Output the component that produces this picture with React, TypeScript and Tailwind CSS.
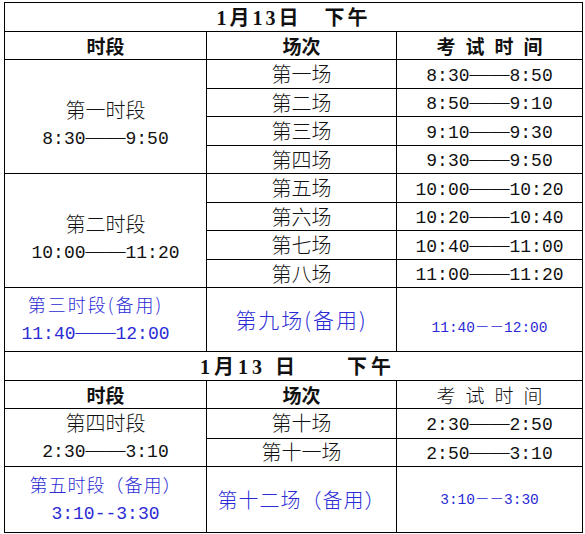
import React from "react";

const cjk = "font-['Noto_Sans_CJK_SC',sans-serif] font-light";
const mono = "font-['Liberation_Mono','Noto_Sans_CJK_SC',monospace]";
const serifDash = "font-['Liberation_Serif',serif]";

// a time range: digits in mono, the dashes in a face where — is a full em
const Time = ({
  from,
  to,
  dash = "——",
  className = "",
  dashClass = serifDash,
}: {
  from: string;
  to: string;
  dash?: string;
  className?: string;
  dashClass?: string;
}) => (
  <span className={`${mono} whitespace-nowrap ${className}`}>
    {from}
    <span className={dashClass}>{dash}</span>
    {to}
  </span>
);

const cell = "border border-black text-center align-middle p-0";

const firstSlots = [
  {
    name: "第一时段",
    from: "8:30",
    to: "9:50",
    rows: [
      ["第一场", "8:30", "8:50"],
      ["第二场", "8:50", "9:10"],
      ["第三场", "9:10", "9:30"],
      ["第四场", "9:30", "9:50"],
    ],
  },
  {
    name: "第二时段",
    from: "10:00",
    to: "11:20",
    rows: [
      ["第五场", "10:00", "10:20"],
      ["第六场", "10:20", "10:40"],
      ["第七场", "10:40", "11:00"],
      ["第八场", "11:00", "11:20"],
    ],
  },
];

const heights = ["h-[29px]", "h-[28px]", "h-[29px]", "h-[28px]"];

export default function App() {
  return (
    <div className="bg-white w-[585px] h-[534px] pt-[2px] pl-[4px] text-[#111]">
      <table className={`border-collapse table-fixed w-[578px] ${cjk}`}>
        <colgroup>
          <col className="w-[202px]" />
          <col className="w-[190px]" />
          <col className="w-[186px]" />
        </colgroup>
        <tbody>
          <tr className="h-[29px]">
            <td colSpan={3} className={`${cell} text-[20px] font-bold leading-none`}>
              <span className="font-['Liberation_Serif','Noto_Sans_CJK_SC',serif] tracking-[3px]">
                1月13日　下午
              </span>
            </td>
          </tr>
          <tr className="h-[28px]">
            <td className={`${cell} text-[19px] font-bold leading-none`}>时段</td>
            <td className={`${cell} text-[19px] font-bold leading-none`}>场次</td>
            <td className={`${cell} text-[19px] font-bold leading-none tracking-[10px] pl-[10px]`}>考试时间</td>
          </tr>

          {firstSlots.map((slot) =>
            slot.rows.map((r, i) => (
              <tr key={r[0]} className={heights[i]}>
                {i === 0 && (
                  <td rowSpan={4} className={`${cell} pt-4`}>
                    <div className="text-[20px] leading-[27px]">{slot.name}</div>
                    <div className="text-[18px] leading-[27px]">
                      <Time from={slot.from} to={slot.to} dashClass={`${serifDash} text-[20px]`} />
                    </div>
                  </td>
                )}
                <td className={`${cell} text-[20px] leading-none`}>{r[0]}</td>
                <td className={`${cell} text-[18px] leading-none`}>
                  <Time from={r[1]} to={r[2]} dashClass={`${serifDash} text-[20px]`} />
                </td>
              </tr>
            ))
          )}

          <tr className="h-[64px] text-[#2b2bd6]">
            <td className={`${cell} pr-[20px]`}>
              <div className="text-[18px] leading-[27px] tracking-[2px]">第三时段(备用)</div>
              <div className="text-[18px] leading-[27px]">
                <Time from="11:40" to="12:00" dashClass={`${serifDash} text-[20px]`} />
              </div>
            </td>
            <td className={`${cell} text-[21px] tracking-[2px]`}>第九场(备用)</td>
            <td className={`${cell} pt-4 text-[14.5px]`}>
              <Time from="11:40" to="12:00" dash="－－" dashClass="font-['Noto_Sans_CJK_SC',sans-serif]" />
            </td>
          </tr>

          <tr className="h-[29px]">
            <td colSpan={3} className={`${cell} text-[20px] font-bold leading-none`}>
              <span className="font-['Liberation_Serif','Noto_Sans_CJK_SC',serif] tracking-[4px] pl-[8px]">
                1月13 日　　下午
              </span>
            </td>
          </tr>
          <tr className="h-[28px]">
            <td className={`${cell} text-[19px] font-bold leading-none`}>时段</td>
            <td className={`${cell} text-[19px] font-bold leading-none`}>场次</td>
            <td className={`${cell} text-[19px] leading-none tracking-[10px] pl-[10px]`}>考试时间</td>
          </tr>
          <tr className="h-[29px]">
            <td rowSpan={2} className={cell}>
              <div className="text-[20px] leading-[27px]">第四时段</div>
              <div className="text-[18px] leading-[27px]">
                <Time from="2:30" to="3:10" dashClass={`${serifDash} text-[20px]`} />
              </div>
            </td>
            <td className={`${cell} text-[20px] leading-none`}>第十场</td>
            <td className={`${cell} text-[18px] leading-none`}>
              <Time from="2:30" to="2:50" dashClass={`${serifDash} text-[20px]`} />
            </td>
          </tr>
          <tr className="h-[28px]">
            <td className={`${cell} text-[20px] leading-none`}>第十一场</td>
            <td className={`${cell} text-[18px] leading-none`}>
              <Time from="2:50" to="3:10" dashClass={`${serifDash} text-[20px]`} />
            </td>
          </tr>
          <tr className="h-[66px] text-[#2b2bd6]">
            <td className={cell}>
              <div className="text-[18px] leading-[27px] tracking-[1px]">第五时段（备用）</div>
              <div className="text-[18px] leading-[27px]">
                <Time from="3:10" to="3:30" dash="--" dashClass="" />
              </div>
            </td>
            <td className={`${cell} text-[20px] tracking-[1px]`}>第十二场（备用）</td>
            <td className={`${cell} text-[14.5px]`}>
              <Time from="3:10" to="3:30" dash="－－" dashClass="font-['Noto_Sans_CJK_SC',sans-serif]" />
            </td>
          </tr>
        </tbody>
      </table>
    </div>
  );
}
